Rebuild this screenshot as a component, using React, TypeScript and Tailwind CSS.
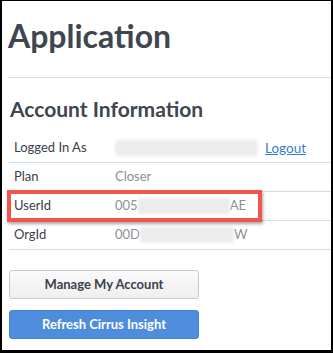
export default function App() {
  return (
    <div className="relative h-[353px] w-[333px] overflow-hidden border-t border-r-2 border-b-[3px] border-l-2 border-black bg-white font-['Lato',sans-serif] text-[#3c4149]">
      <div className="ml-[6px] h-[77px] border-b border-[#d8dbe0] pt-[16px]">
        <h1 className="text-[32px] font-bold leading-[38px] text-[#3e4650]">
          Application
        </h1>
      </div>

      <h2 className="mt-[18px] ml-[8px] text-[21px] font-bold leading-[26px] text-[#3e4650]">
        Account Information
      </h2>

      <div className="mt-[12px] ml-[7px] text-[13px]">
        <div className="flex h-[29px] items-center border-b border-[#d8dbe0] pl-[5px]">
          <span className="w-[101px] text-[#3c4149]">Logged In As</span>
          <span className="h-[16px] w-[143px] rounded-sm bg-[#ececee] blur-[1.5px]" />
          <a href="#" className="ml-[7px] text-[13.5px] text-[#3a7bd0] underline">
            Logout
          </a>
        </div>
        <div className="flex h-[29px] items-center border-b border-[#d8dbe0] pl-[5px]">
          <span className="w-[101px] text-[#3c4149]">Plan</span>
          <span className="text-[#8b9097]">Closer</span>
        </div>
        <div className="flex h-[29px] items-center border-b border-[#d8dbe0] pl-[5px]">
          <span className="w-[101px] text-[#3c4149]">UserId</span>
          <span className="text-[#8b9097]">005</span>
          <span className="h-[16px] w-[92px] bg-[#ececee] blur-[1.5px]" />
          <span className="text-[#8b9097]">AE</span>
        </div>
        <div className="flex h-[29px] items-center border-b border-[#d8dbe0] pl-[5px]">
          <span className="w-[101px] text-[#3c4149]">OrgId</span>
          <span className="text-[#8b9097]">00D</span>
          <span className="h-[16px] w-[94px] bg-[#ececee] blur-[1.5px]" />
          <span className="text-[#8b9097]">W</span>
        </div>
      </div>

      <div className="mt-[20px] ml-[7px] flex w-[190px] flex-col gap-[11px]">
        <button className="h-[29px] rounded-[3px] border border-[#c6cad0] bg-gradient-to-b from-[#fafafa] to-[#efefef] text-[13px] font-bold text-[#3c4149]">
          Manage My Account
        </button>
        <button className="h-[29px] rounded-[3px] border border-[#4482d2] bg-[#4e8ddc] text-[13px] font-bold text-white">
          Refresh Cirrus Insight
        </button>
      </div>

      {/* highlight annotation around the UserId row */}
      <div className="absolute top-[189px] left-[5px] h-[32px] w-[255px] border-[4px] border-[#f1544a] shadow-[1px_2px_3px_rgba(0,0,0,0.35)]" />
    </div>
  );
}
